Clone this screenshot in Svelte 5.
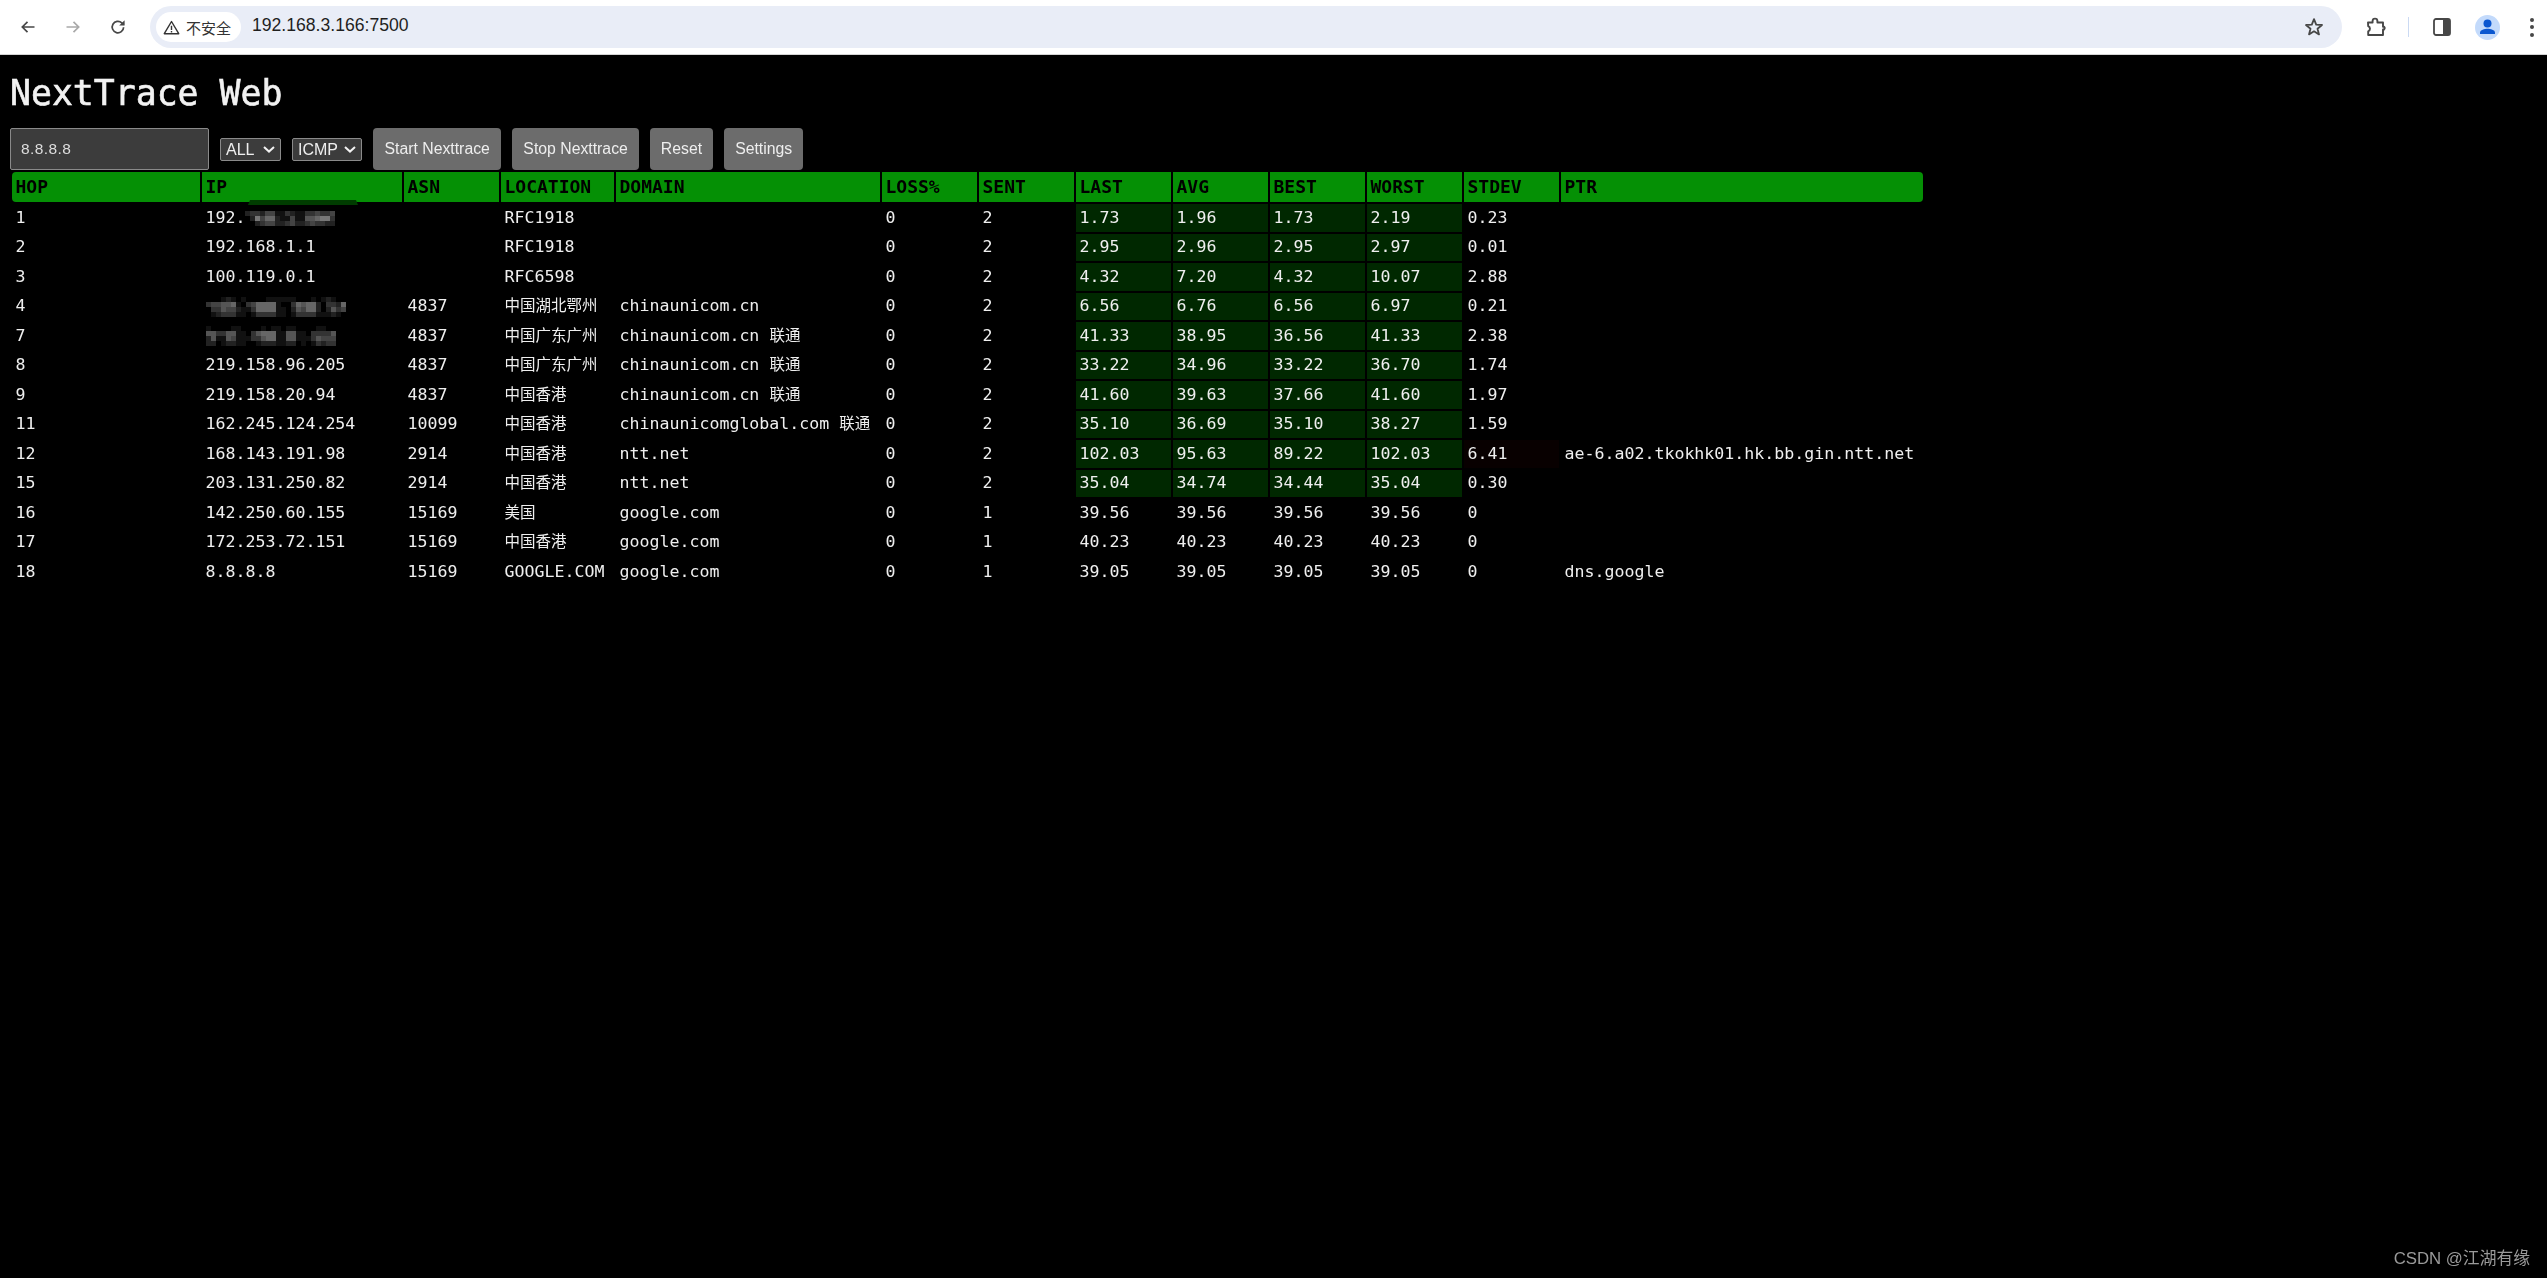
<script lang="ts">
  const columns = ["HOP", "IP", "ASN", "LOCATION", "DOMAIN", "LOSS%", "SENT", "LAST", "AVG", "BEST", "WORST", "STDEV", "PTR"];

  // ip may be prefixed text + a pixelated patch where the screenshot was masked
  const hops = [
    { hop: 1, ip: "192.", mask: ["233244113211334334", "027466211411556773", "002344223422343322"], asn: "", loc: "RFC1918", domain: "", isp: "", sent: 2, last: "1.73", avg: "1.96", best: "1.73", worst: "2.19", stdev: "0.23", ptr: "", live: true },
    { hop: 2, ip: "192.168.1.1", asn: "", loc: "RFC1918", domain: "", isp: "", sent: 2, last: "2.95", avg: "2.96", best: "2.95", worst: "2.97", stdev: "0.01", ptr: "", live: true },
    { hop: 3, ip: "100.119.0.1", asn: "", loc: "RFC6598", domain: "", isp: "", sent: 2, last: "4.32", avg: "7.20", best: "4.32", worst: "10.07", stdev: "2.88", ptr: "", live: true },
    { hop: 4, ip: "", mask: ["0001210100001111110001012100", "3445561034666610036566203326", "0335442113666611025466202534", "0123331101333311013333111210"], asn: "4837", loc: "中国湖北鄂州", domain: "chinaunicom.cn", isp: "", sent: 2, last: "6.56", avg: "6.76", best: "6.56", worst: "6.97", stdev: "0.21", ptr: "", live: true },
    { hop: 7, ip: "", mask: ["10000110000101101100001100", "55335511035666115511033335", "25115411133566115511135444", "22012211001222112201013233"], asn: "4837", loc: "中国广东广州", domain: "chinaunicom.cn", isp: "联通", sent: 2, last: "41.33", avg: "38.95", best: "36.56", worst: "41.33", stdev: "2.38", ptr: "", live: true },
    { hop: 8, ip: "219.158.96.205", asn: "4837", loc: "中国广东广州", domain: "chinaunicom.cn", isp: "联通", sent: 2, last: "33.22", avg: "34.96", best: "33.22", worst: "36.70", stdev: "1.74", ptr: "", live: true },
    { hop: 9, ip: "219.158.20.94", asn: "4837", loc: "中国香港", domain: "chinaunicom.cn", isp: "联通", sent: 2, last: "41.60", avg: "39.63", best: "37.66", worst: "41.60", stdev: "1.97", ptr: "", live: true },
    { hop: 11, ip: "162.245.124.254", asn: "10099", loc: "中国香港", domain: "chinaunicomglobal.com", isp: "联通", sent: 2, last: "35.10", avg: "36.69", best: "35.10", worst: "38.27", stdev: "1.59", ptr: "", live: true },
    { hop: 12, ip: "168.143.191.98", asn: "2914", loc: "中国香港", domain: "ntt.net", isp: "", sent: 2, last: "102.03", avg: "95.63", best: "89.22", worst: "102.03", stdev: "6.41", ptr: "ae-6.a02.tkokhk01.hk.bb.gin.ntt.net", live: true, warn: true },
    { hop: 15, ip: "203.131.250.82", asn: "2914", loc: "中国香港", domain: "ntt.net", isp: "", sent: 2, last: "35.04", avg: "34.74", best: "34.44", worst: "35.04", stdev: "0.30", ptr: "", live: true },
    { hop: 16, ip: "142.250.60.155", asn: "15169", loc: "美国", domain: "google.com", isp: "", sent: 1, last: "39.56", avg: "39.56", best: "39.56", worst: "39.56", stdev: "0", ptr: "", live: false },
    { hop: 17, ip: "172.253.72.151", asn: "15169", loc: "中国香港", domain: "google.com", isp: "", sent: 1, last: "40.23", avg: "40.23", best: "40.23", worst: "40.23", stdev: "0", ptr: "", live: false },
    { hop: 18, ip: "8.8.8.8", asn: "15169", loc: "GOOGLE.COM", domain: "google.com", isp: "", sent: 1, last: "39.05", avg: "39.05", best: "39.05", worst: "39.05", stdev: "0", ptr: "dns.google", live: false },
  ];

  const isCjk = (s: string) => /[^\x00-\x7f]/.test(s);
  const grey = (c: string) => {
    const v = parseInt(c, 16) * 17;
    return `rgb(${v},${v},${v})`;
  };
</script>

{#snippet mosaic(rows: string[])}
  <svg class="mosaic" width={rows[0].length * 5} height={rows.length * 5} aria-hidden="true">
    {#each rows as row, y}
      {#each row.split("") as c, x}
        <rect x={x * 5} y={y * 5} width="5" height="5" fill={grey(c)} />
      {/each}
    {/each}
  </svg>
{/snippet}

{#snippet dropdown(label: string)}
  <div class="select">
    <select><option>{label}</option></select>
    <svg viewBox="0 0 12 7" aria-hidden="true"><path d="M1 1l5 4.6L11 1" fill="none" stroke="#f2f2f2" stroke-width="2" /></svg>
  </div>
{/snippet}

<header class="browser">
  <svg class="nav" viewBox="0 0 16 16" aria-hidden="true"><path d="M14.5 8H2.5M7.5 2.8 2.3 8l5.2 5.2" fill="none" stroke="#474747" stroke-width="1.7" /></svg>
  <svg class="nav" viewBox="0 0 16 16" aria-hidden="true"><path d="M1.5 8h12M8.5 2.8 13.7 8l-5.2 5.2" fill="none" stroke="#a9a9a9" stroke-width="1.7" /></svg>
  <svg class="nav" viewBox="0 0 16 16" aria-hidden="true"><path d="M13.6 8.2A5.7 5.7 0 1 1 11.8 3.9L13.8 5.6" fill="none" stroke="#474747" stroke-width="1.7" /><path d="M14.6 1.2v5.4H9.2z" fill="#474747" /></svg>
  <div class="omnibox">
    <div class="chip">
      <svg class="warn" viewBox="0 0 18 16" aria-hidden="true"><path d="M9 1.6 1.3 14.6h15.4z" fill="none" stroke="#333" stroke-width="1.5" stroke-linejoin="round" /><path d="M9 6v4.6M9 11.6v1.6" stroke="#333" stroke-width="1.5" /></svg>
      <span>不安全</span>
    </div>
    <span class="url">192.168.3.166:7500</span>
    <svg class="star" viewBox="0 0 20 20" aria-hidden="true"><path d="M10 2.2 12.2 7.6l5.8.4-4.5 3.7 1.5 5.7L10 14.3l-5 3.1 1.5-5.7L2 8l5.8-.4z" fill="none" stroke="#474747" stroke-width="1.8" stroke-linejoin="round" /></svg>
  </div>
  <svg class="puzzle" viewBox="0 0 21 20" aria-hidden="true"><path d="M2 5.5h4.6V4a2.4 2.4 0 0 1 4.8 0v1.5H17v4.2h1a2 2 0 0 1 0 2.8h-1V18H2.2v-3.6a2.8 2.8 0 0 0 0-5.2z" fill="none" stroke="#474747" stroke-width="1.9" stroke-linejoin="round" /></svg>
  <i class="divider"></i>
  <svg class="panel" viewBox="0 0 18 18" aria-hidden="true"><rect x="1" y="1" width="16" height="16" rx="2" fill="none" stroke="#474747" stroke-width="1.8" /><rect x="10" y="1" width="7" height="16" fill="#474747" /></svg>
  <div class="avatar">
    <svg viewBox="0 0 25 25" aria-hidden="true"><circle cx="12.5" cy="8.6" r="4" fill="#0b57d0" /><path d="M5 19v-1.4c0-2.6 4.6-3.8 7.5-3.8s7.5 1.2 7.5 3.8V19z" fill="#0b57d0" /></svg>
  </div>
  <div class="dots"><i></i><i></i><i></i></div>
</header>

<main>
  <h1>NextTrace Web</h1>
  <div class="controls">
    <input value="8.8.8.8" />
    {@render dropdown("ALL")}
    {@render dropdown("ICMP")}
    <button class="start">Start Nexttrace</button>
    <button>Stop Nexttrace</button>
    <button>Reset</button>
    <button>Settings</button>
  </div>

  <table>
    <thead>
      <tr>
        {#each columns as col}
          <th>
            {col}
            {#if col === "IP"}
              <svg class="smear" viewBox="0 0 110 5" aria-hidden="true"><polygon points="2,0 108,0 110,5 0,5" fill="#003c00" /></svg>
            {/if}
          </th>
        {/each}
      </tr>
    </thead>
    <tbody>
      {#each hops as h}
        <tr class:live={h.live}>
          <td>{h.hop}</td>
          <td>{h.ip}{#if h.mask}{@render mosaic(h.mask)}{/if}</td>
          <td>{h.asn}</td>
          <td><span class:cjk={isCjk(h.loc)}>{h.loc}</span></td>
          <td>{h.domain}{#if h.isp}&nbsp;<span class="cjk">{h.isp}</span>{/if}</td>
          <td>0</td>
          <td>{h.sent}</td>
          <td class="rtt">{h.last}</td>
          <td class="rtt">{h.avg}</td>
          <td class="rtt">{h.best}</td>
          <td class="rtt">{h.worst}</td>
          <td class:warn={h.warn}>{h.stdev}</td>
          <td>{h.ptr}</td>
        </tr>
      {/each}
    </tbody>
  </table>
</main>

<div class="watermark">CSDN @江湖有缘</div>

<style>
  :global(body) {
    background: #000;
    min-height: 1278px;
    overflow: hidden;
  }

  .browser {
    display: flex;
    align-items: center;
    height: 54px;
    background: #fff;
    border-bottom: 1px solid #d4d4d4;
    padding-left: 20px;
    box-sizing: content-box;
  }

  .nav {
    width: 16px;
    height: 16px;
    margin-right: 29px;
    flex-shrink: 0;
  }

  .omnibox {
    display: flex;
    align-items: center;
    width: 2192px;
    height: 42px;
    margin-left: -5px;
    background: #e9edf7;
    border-radius: 21px;
    padding: 0 18px 0 6px;
    box-sizing: border-box;
  }

  .chip {
    display: flex;
    align-items: center;
    gap: 6px;
    height: 30px;
    width: 85px;
    padding-left: 7px;
    box-sizing: border-box;
    background: #fff;
    border-radius: 15px;
    font: 15px "Noto Sans CJK SC", sans-serif;
    color: #333;
  }

  .warn {
    width: 17px;
    height: 15px;
  }

  .url {
    margin: -3px 0 0 11px;
    font: 17.6px "Liberation Sans", sans-serif;
    color: #1f1f1f;
  }

  .star {
    width: 20px;
    height: 20px;
    margin-left: auto;
  }

  .puzzle {
    width: 21px;
    height: 20px;
    margin-left: 24px;
  }

  .divider {
    width: 1px;
    height: 20px;
    margin-left: 21px;
    background: #cbdaf3;
  }

  .panel {
    width: 18px;
    height: 18px;
    margin-left: 24px;
  }

  .avatar {
    width: 25px;
    height: 25px;
    margin-left: 24px;
    border-radius: 50%;
    background: #c3dafb;
  }

  .avatar svg {
    display: block;
  }

  .dots {
    display: flex;
    flex-direction: column;
    gap: 3.5px;
    margin-left: 30px;
  }

  .dots i {
    width: 4px;
    height: 4px;
    border-radius: 50%;
    background: #474747;
  }

  /* own layer: greyscale text, as in the reference */
  main {
    padding-left: 10px;
    will-change: transform;
  }

  h1 {
    margin: 0;
    padding-top: 18px;
    height: 55px;
    font: 400 34.8px/40px "DejaVu Sans Mono", monospace;
    -webkit-text-stroke: 0.6px #f2f2f2;
    color: #f2f2f2;
  }

  .controls {
    display: flex;
    align-items: center;
    gap: 11px;
    height: 42px;
  }

  input {
    width: 199px;
    height: 42px;
    box-sizing: border-box;
    padding: 0 10px;
    background: #3c3c3c;
    border: 1px solid #8a8a8a;
    border-radius: 2px;
    color: #ddd;
    font: 15.5px "Liberation Sans", sans-serif;
    letter-spacing: 0.4px;
  }

  .select {
    position: relative;
    height: 23px;
  }

  .select:nth-of-type(1) {
    width: 61px;
  }

  .select:nth-of-type(2) {
    width: 70px;
  }

  .select svg {
    position: absolute;
    right: 6px;
    top: 8px;
    width: 12px;
    height: 7px;
    pointer-events: none;
  }

  select {
    appearance: none;
    display: block;
    width: 100%;
    height: 23px;
    padding: 0 0 0 5px;
    background: #3c3c3c;
    border: 1px solid #8a8a8a;
    border-radius: 2px;
    color: #eee;
    font: 16px "Liberation Sans", sans-serif;
  }

  button {
    height: 42px;
    padding: 0 11px;
    background: #6c6c6c;
    border: none;
    border-radius: 4px;
    color: #eee;
    font: 15.8px "Liberation Sans", sans-serif;
  }

  button.start {
    padding: 0 11.5px;
  }

  table {
    width: 1915px;
    table-layout: fixed;
    border-collapse: separate;
    border-spacing: 2px;
    font: 16.6px/20px "DejaVu Sans Mono", "Noto Sans CJK SC", monospace;
    color: #efefef;
  }

  th {
    position: relative;
    height: 30px;
    padding: 0 3.5px;
    box-sizing: border-box;
    background: #059005;
    color: #000;
    font-size: 18px;
    font-weight: 700;
    text-align: left;
    white-space: nowrap;
  }

  th:first-child {
    width: 188px;
    border-radius: 4px 0 0 4px;
  }

  th:nth-child(2) {
    width: 200px;
  }

  th:nth-child(3) {
    width: 95px;
  }

  th:nth-child(4) {
    width: 113px;
  }

  th:nth-child(5) {
    width: 264px;
  }

  th:nth-child(n + 6) {
    width: 95px;
  }

  th:last-child {
    width: auto;
    border-radius: 0 4px 4px 0;
  }

  .smear {
    position: absolute;
    left: 46px;
    top: 28px;
    width: 110px;
    height: 5px;
  }

  td {
    height: 27.5px;
    padding: 0 3.5px;
    box-sizing: border-box;
    white-space: nowrap;
  }

  tr.live .rtt {
    background: #002800;
  }

  td.warn {
    background: #080000;
  }

  .cjk {
    font-size: 15.5px;
    line-height: 1;
  }

  .mosaic {
    vertical-align: middle;
    margin: -6px 0;
  }

  .watermark {
    position: fixed;
    right: 17px;
    bottom: 9px;
    font: 16.8px "Liberation Sans", "Noto Sans CJK SC", sans-serif;
    color: #9a9a9a;
  }
</style>
